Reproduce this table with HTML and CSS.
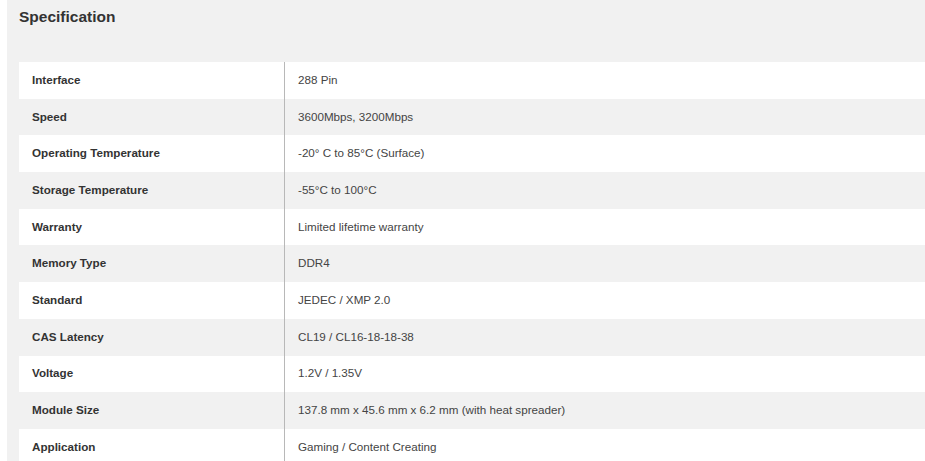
FILE: index.html
```html
<!DOCTYPE html>
<html lang="en">
<head>
<meta charset="utf-8">
<title>Specification</title>
<link rel="stylesheet" href="styles.css">
</head>
<body>
<section class="panel">
  <h2 class="title">Specification</h2>
  <table class="spec">
    <tbody>
      <tr><th>Interface</th><td>288 Pin</td></tr>
      <tr><th>Speed</th><td>3600Mbps, 3200Mbps</td></tr>
      <tr><th>Operating Temperature</th><td>-20° C to 85°C (Surface)</td></tr>
      <tr><th>Storage Temperature</th><td>-55°C to 100°C</td></tr>
      <tr><th>Warranty</th><td>Limited lifetime warranty</td></tr>
      <tr><th>Memory Type</th><td>DDR4</td></tr>
      <tr><th>Standard</th><td>JEDEC / XMP 2.0</td></tr>
      <tr><th>CAS Latency</th><td>CL19 / CL16-18-18-38</td></tr>
      <tr><th>Voltage</th><td>1.2V / 1.35V</td></tr>
      <tr><th>Module Size</th><td>137.8 mm x 45.6 mm x 6.2 mm (with heat spreader)</td></tr>
      <tr><th>Application</th><td>Gaming / Content Creating</td></tr>
    </tbody>
  </table>
</section>
</body>
</html>
```
FILE: styles.css
```css
html, body {
  margin: 0;
  padding: 0;
  background: #ffffff;
  overflow: hidden;
}
body {
  font-family: "Liberation Sans", Arial, sans-serif;
  padding-left: 7px;
}
.panel {
  background: #f1f1f1;
  padding: 8px 0 0 12px;
}
.title {
  margin: 0;
  font-size: 15.5px;
  line-height: 18px;
  font-weight: bold;
  color: #333333;
  height: 54px;
}
.spec {
  border-collapse: collapse;
  width: 100%;
  font-size: 11.65px;
}
.spec tr {
  height: 36.7px;
}
.spec tr:nth-child(odd) {
  background: #ffffff;
}
.spec tr:nth-child(even) {
  background: #f1f1f1;
}
.spec th {
  width: 252px;
  padding: 0 0 2px 13px;
  text-align: left;
  font-weight: bold;
  color: #333333;
  vertical-align: middle;
}
.spec td {
  padding: 0 0 2px 13px;
  border-left: 1px solid #b8b8b8;
  color: #444444;
  vertical-align: middle;
}
```
